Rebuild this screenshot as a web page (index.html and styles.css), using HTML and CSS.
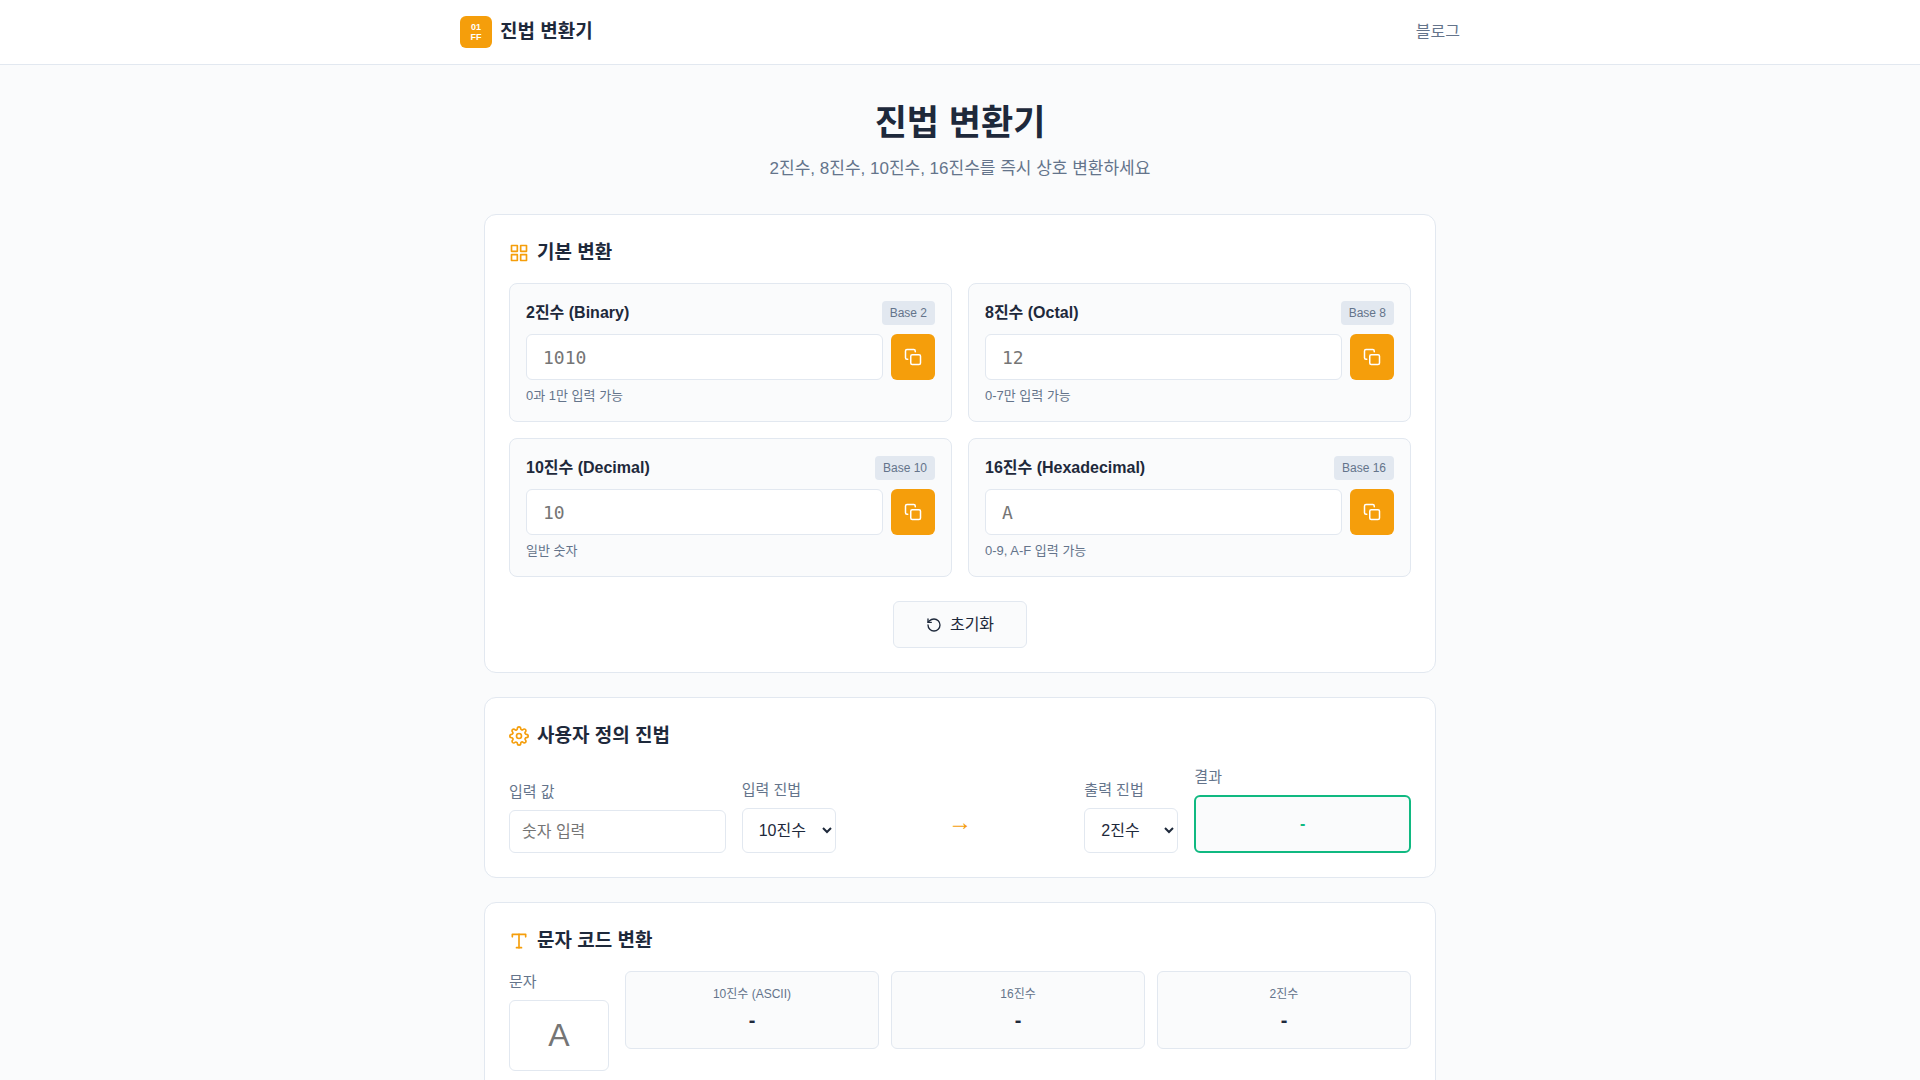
FILE: index.html
```html
<!DOCTYPE html>
<html lang="ko">
<head>
<meta charset="UTF-8">
<meta name="viewport" content="width=device-width, initial-scale=1">
<title>진법 변환기</title>
<link rel="stylesheet" href="styles.css">
</head>
<body>
<svg class="sprite" aria-hidden="true">
  <symbol id="icon-copy" viewBox="0 0 24 24">
    <rect x="9" y="9" width="13" height="13" rx="2"/>
    <path d="M5 15H4a2 2 0 0 1-2-2V4a2 2 0 0 1 2-2h9a2 2 0 0 1 2 2v1"/>
  </symbol>
</svg>
<header class="site-header">
  <div class="header-inner">
    <a class="brand" href="#"><span class="brand-mark"><span>01</span><span>FF</span></span><span class="brand-name">진법 변환기</span></a>
    <nav><a class="nav-link" href="#">블로그</a></nav>
  </div>
</header>
<main class="page">
  <div class="intro">
    <h1>진법 변환기</h1>
    <p>2진수, 8진수, 10진수, 16진수를 즉시 상호 변환하세요</p>
  </div>

  <section class="card">
    <h2 class="card-title">
      <svg class="icon icon-title" viewBox="0 0 24 24"><rect x="3" y="3" width="7" height="7"/><rect x="14" y="3" width="7" height="7"/><rect x="14" y="14" width="7" height="7"/><rect x="3" y="14" width="7" height="7"/></svg>
      기본 변환
    </h2>
    <div class="base-grid">
      <div class="base-item">
        <div class="base-head"><label for="binary">2진수 (Binary)</label><span class="badge">Base 2</span></div>
        <div class="base-row"><input class="base-input" id="binary" type="text" placeholder="1010"><button class="copy-btn" type="button" aria-label="복사"><svg class="icon icon-copy"><use href="#icon-copy"/></svg></button></div>
        <p class="hint">0과 1만 입력 가능</p>
      </div>
      <div class="base-item">
        <div class="base-head"><label for="octal">8진수 (Octal)</label><span class="badge">Base 8</span></div>
        <div class="base-row"><input class="base-input" id="octal" type="text" placeholder="12"><button class="copy-btn" type="button" aria-label="복사"><svg class="icon icon-copy"><use href="#icon-copy"/></svg></button></div>
        <p class="hint">0-7만 입력 가능</p>
      </div>
      <div class="base-item">
        <div class="base-head"><label for="decimal">10진수 (Decimal)</label><span class="badge">Base 10</span></div>
        <div class="base-row"><input class="base-input" id="decimal" type="text" placeholder="10"><button class="copy-btn" type="button" aria-label="복사"><svg class="icon icon-copy"><use href="#icon-copy"/></svg></button></div>
        <p class="hint">일반 숫자</p>
      </div>
      <div class="base-item">
        <div class="base-head"><label for="hex">16진수 (Hexadecimal)</label><span class="badge">Base 16</span></div>
        <div class="base-row"><input class="base-input" id="hex" type="text" placeholder="A"><button class="copy-btn" type="button" aria-label="복사"><svg class="icon icon-copy"><use href="#icon-copy"/></svg></button></div>
        <p class="hint">0-9, A-F 입력 가능</p>
      </div>
    </div>
    <div class="actions">
      <button class="reset-btn" type="button">
        <svg class="icon icon-reset" viewBox="0 0 24 24"><path d="M3 12a9 9 0 1 0 9-9 9.75 9.75 0 0 0-6.74 2.74L3 8"/><path d="M3 3v5h5"/></svg>
        초기화
      </button>
    </div>
  </section>

  <section class="card">
    <h2 class="card-title">
      <svg class="icon icon-title" viewBox="0 0 24 24"><circle cx="12" cy="12" r="3"/><path d="M19.4 15a1.65 1.65 0 0 0 .33 1.82l.06.06a2 2 0 0 1 0 2.83 2 2 0 0 1-2.83 0l-.06-.06a1.65 1.65 0 0 0-1.82-.33 1.65 1.65 0 0 0-1 1.51V21a2 2 0 0 1-2 2 2 2 0 0 1-2-2v-.09A1.65 1.65 0 0 0 9 19.4a1.65 1.65 0 0 0-1.82.33l-.06.06a2 2 0 0 1-2.83 0 2 2 0 0 1 0-2.83l.06-.06a1.65 1.65 0 0 0 .33-1.82 1.65 1.65 0 0 0-1.51-1H3a2 2 0 0 1-2-2 2 2 0 0 1 2-2h.09A1.65 1.65 0 0 0 4.6 9a1.65 1.65 0 0 0-.33-1.82l-.06-.06a2 2 0 0 1 0-2.83 2 2 0 0 1 2.83 0l.06.06a1.65 1.65 0 0 0 1.82.33H9a1.65 1.65 0 0 0 1-1.51V3a2 2 0 0 1 2-2 2 2 0 0 1 2 2v.09a1.65 1.65 0 0 0 1 1.51 1.65 1.65 0 0 0 1.82-.33l.06-.06a2 2 0 0 1 2.83 0 2 2 0 0 1 0 2.83l-.06.06a1.65 1.65 0 0 0-.33 1.82V9a1.65 1.65 0 0 0 1.51 1H21a2 2 0 0 1 2 2 2 2 0 0 1-2 2h-.09a1.65 1.65 0 0 0-1.51 1z"/></svg>
      사용자 정의 진법
    </h2>
    <div class="custom-grid">
      <div class="field"><label for="custom-value">입력 값</label><input class="text-input" id="custom-value" type="text" placeholder="숫자 입력"></div>
      <div class="field"><label for="from-base">입력 진법</label><select class="select" id="from-base"><option>2진수</option><option>8진수</option><option selected>10진수</option><option>16진수</option></select></div>
      <div class="arrow">→</div>
      <div class="field"><label for="to-base">출력 진법</label><select class="select" id="to-base"><option selected>2진수</option><option>8진수</option><option>10진수</option><option>16진수</option></select></div>
      <div class="field"><label for="custom-result">결과</label><output class="result" id="custom-result">-</output></div>
    </div>
  </section>

  <section class="card">
    <h2 class="card-title">
      <svg class="icon icon-title" viewBox="0 0 24 24"><path d="M4 7V4h16v3"/><path d="M9 20h6"/><path d="M12 4v16"/></svg>
      문자 코드 변환
    </h2>
    <div class="char-layout">
      <div class="field char-field"><label for="char">문자</label><input class="char-input" id="char" type="text" maxlength="1" placeholder="A"></div>
      <div class="codes">
        <div class="code"><span class="code-label">10진수 (ASCII)</span><span class="code-value">-</span></div>
        <div class="code"><span class="code-label">16진수</span><span class="code-value">-</span></div>
        <div class="code"><span class="code-label">2진수</span><span class="code-value">-</span></div>
      </div>
    </div>
  </section>
</main>
</body>
</html>
```
FILE: styles.css
```css
:root {
  --accent: #f59e0b;
  --success: #10b981;
  --bg: #fafbfc;
  --surface: #ffffff;
  --border: #e2e8f0;
  --text: #1e293b;
  --muted: #64748b;
  --sans: "Liberation Sans", "Noto Sans CJK KR", sans-serif;
}

* { box-sizing: border-box; margin: 0; padding: 0; }

body {
  background: var(--bg);
  color: var(--text);
  font-family: var(--sans);
  font-size: 16px;
  line-height: 26px;
}

input, select, button { font-family: inherit; color: inherit; }
a { color: inherit; text-decoration: none; }
.sprite { display: none; }

.icon {
  flex: none;
  fill: none;
  stroke: currentColor;
  stroke-width: 2;
  stroke-linecap: round;
  stroke-linejoin: round;
}
.icon-title { width: 20px; height: 20px; color: var(--accent); }
.icon-copy { width: 18px; height: 18px; }
.icon-reset { width: 16px; height: 16px; }

/* Header */
.site-header { background: var(--surface); border-bottom: 1px solid var(--border); }
.header-inner {
  max-width: 1000px;
  margin: 0 auto;
  padding: 16px 0;
  display: flex;
  align-items: center;
  justify-content: space-between;
}
.brand { display: flex; align-items: center; gap: 8px; }
.brand-mark {
  width: 32px;
  height: 32px;
  border-radius: 6px;
  background: var(--accent);
  color: #fff;
  font-size: 9px;
  font-weight: 700;
  line-height: 10px;
  display: flex;
  flex-direction: column;
  align-items: center;
  justify-content: center;
}
.brand-name { font-size: 19px; font-weight: 700; }
.nav-link { color: var(--muted); font-size: 16px; }

/* Page */
.page { max-width: 1000px; margin: 0 auto; padding: 32px 24px; }
.intro { text-align: center; margin-bottom: 32px; }
h1 { font-size: 35px; line-height: 52px; margin-bottom: 7px; }
.intro p { color: var(--muted); font-size: 17px; }

.card {
  background: var(--surface);
  border: 1px solid var(--border);
  border-radius: 12px;
  padding: 24px;
  margin-bottom: 24px;
}
.card-title {
  display: flex;
  align-items: center;
  gap: 8px;
  font-size: 19px;
  line-height: 28px;
  margin-bottom: 16px;
}

/* Base conversion */
.base-grid { display: grid; grid-template-columns: 1fr 1fr; gap: 16px; }
.base-item {
  background: var(--bg);
  border: 1px solid var(--border);
  border-radius: 8px;
  padding: 16px;
}
.base-head {
  display: flex;
  justify-content: space-between;
  align-items: center;
  margin-bottom: 8px;
  font-weight: 700;
}
.badge {
  background: var(--border);
  color: var(--muted);
  border-radius: 4px;
  padding: 2px 8px;
  font-size: 12px;
  font-weight: 400;
  line-height: 20px;
}
.base-row { display: flex; gap: 8px; }
.base-input {
  flex: 1;
  min-width: 0;
  height: 46px;
  padding: 0 16px;
  border: 1px solid var(--border);
  border-radius: 6px;
  background: var(--surface);
  font-family: "DejaVu Sans Mono", monospace;
  font-size: 18px;
}
.copy-btn {
  width: 44px;
  border: 0;
  border-radius: 6px;
  background: var(--accent);
  color: #fff;
  display: flex;
  align-items: center;
  justify-content: center;
}
.hint { color: var(--muted); font-size: 13px; line-height: 19px; margin-top: 6px; }

.actions { display: flex; justify-content: center; margin-top: 24px; }
.reset-btn {
  display: flex;
  align-items: center;
  gap: 8px;
  padding: 12px 32px;
  border: 1px solid var(--border);
  border-radius: 6px;
  background: var(--bg);
  font-size: 16px;
  line-height: 21px;
}

/* Custom base */
.custom-grid {
  display: grid;
  grid-template-columns: 1fr auto 1fr auto 1fr;
  gap: 16px;
  align-items: end;
}
.field { display: flex; flex-direction: column; gap: 7px; }
.field label { color: var(--muted); font-size: 15px; line-height: 22px; }
.text-input, .select {
  width: 100%;
  border: 1px solid var(--border);
  border-radius: 6px;
  background: var(--surface);
  font-size: 16px;
}
.text-input { height: 43px; padding: 0 12px; }
.select { height: 45px; padding: 0 12px; }
.arrow { color: var(--accent); font-size: 24px; text-align: center; padding-bottom: 18px; }
.result {
  border: 2px solid var(--success);
  border-radius: 6px;
  background: var(--bg);
  color: var(--success);
  font-weight: 700;
  text-align: center;
  padding: 14px;
}

/* Character codes */
.char-layout { display: flex; gap: 16px; align-items: flex-start; }
.char-field { width: 100px; }
.char-input {
  width: 100%;
  height: 71px;
  border: 1px solid var(--border);
  border-radius: 6px;
  background: var(--surface);
  font-size: 32px;
  text-align: center;
}
.codes { flex: 1; display: grid; grid-template-columns: repeat(3, 1fr); gap: 12px; }
.code {
  display: flex;
  flex-direction: column;
  text-align: center;
  background: var(--bg);
  border: 1px solid var(--border);
  border-radius: 6px;
  padding: 12px;
}
.code-label { color: var(--muted); font-size: 12px; line-height: 20px; }
.code-value { font-size: 20px; font-weight: 700; line-height: 32px; }
```
